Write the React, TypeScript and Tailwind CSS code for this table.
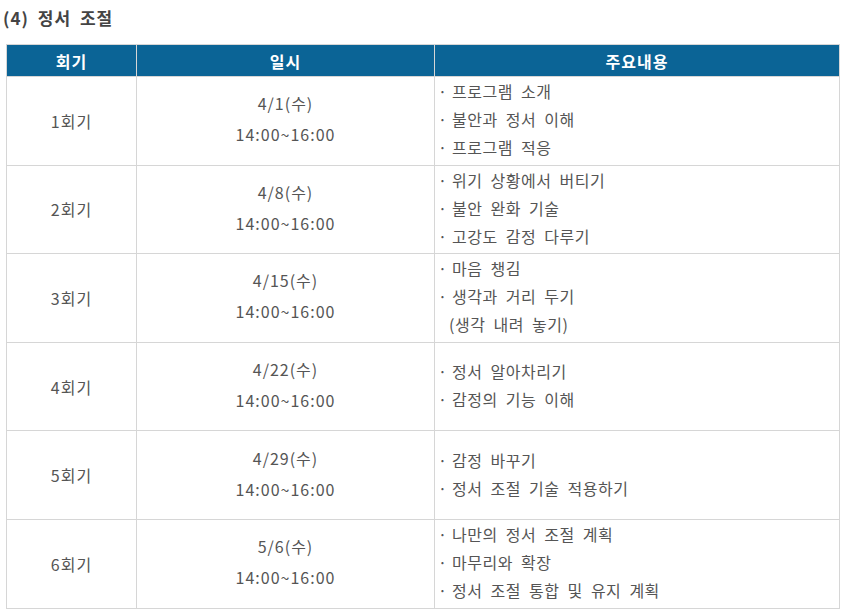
const rows = [
  { no: '1회기', date: '4/1(수)', items: ['프로그램 소개', '불안과 정서 이해', '프로그램 적응'] },
  { no: '2회기', date: '4/8(수)', items: ['위기 상황에서 버티기', '불안 완화 기술', '고강도 감정 다루기'] },
  { no: '3회기', date: '4/15(수)', items: ['마음 챙김', '생각과 거리 두기', '(생각 내려 놓기)'] },
  { no: '4회기', date: '4/22(수)', items: ['정서 알아차리기', '감정의 기능 이해'] },
  { no: '5회기', date: '4/29(수)', items: ['감정 바꾸기', '정서 조절 기술 적용하기'] },
  { no: '6회기', date: '5/6(수)', items: ['나만의 정서 조절 계획', '마무리와 확장', '정서 조절 통합 및 유지 계획'] },
];

export default function App() {
  return (
    <div className="w-[844px] h-[612px] bg-white font-['Noto_Sans_CJK_KR','Noto_Sans',sans-serif] text-[#555]">
      <h3 className="pl-[3px] pt-[5px] h-[44px] text-[17px] leading-[26px] font-bold text-[#444] tracking-[1px] [word-spacing:4px]">
        (4) 정서 조절
      </h3>
      <table className="ml-[6px] w-[833px] border-collapse table-fixed">
        <colgroup>
          <col className="w-[130px]" />
          <col className="w-[298px]" />
          <col className="w-[405px]" />
        </colgroup>
        <thead>
          <tr className="h-[32px] bg-[#0b6496] text-white text-[16px] font-bold tracking-[1px]">
            <th className="border border-[#d6d6d6] font-bold">회기</th>
            <th className="border border-[#d6d6d6] font-bold">일시</th>
            <th className="border border-[#d6d6d6] font-bold">주요내용</th>
          </tr>
        </thead>
        <tbody className="text-[16px]">
          {rows.map((r) => (
            <tr key={r.no} className="h-[88.6px]">
              <td className="border border-[#d6d6d6] text-center align-middle tracking-[1px]">{r.no}</td>
              <td className="border border-[#d6d6d6] text-center align-middle leading-[31px] pb-[3px] tracking-[1px]">
                <div>{r.date}</div>
                <div>14:00~16:00</div>
              </td>
              <td className="border border-[#d6d6d6] pl-[3px] pb-[3px] align-middle leading-[28px]">
                {r.items.map((it) => (
                  <div key={it} className="flex items-center">
                    <span className={it.startsWith('(') ? 'w-[11px] text-transparent' : 'w-[14px]'}>·</span>
                    <span className="tracking-[0.5px] [word-spacing:4px]">{it}</span>
                  </div>
                ))}
              </td>
            </tr>
          ))}
        </tbody>
      </table>
    </div>
  );
}
